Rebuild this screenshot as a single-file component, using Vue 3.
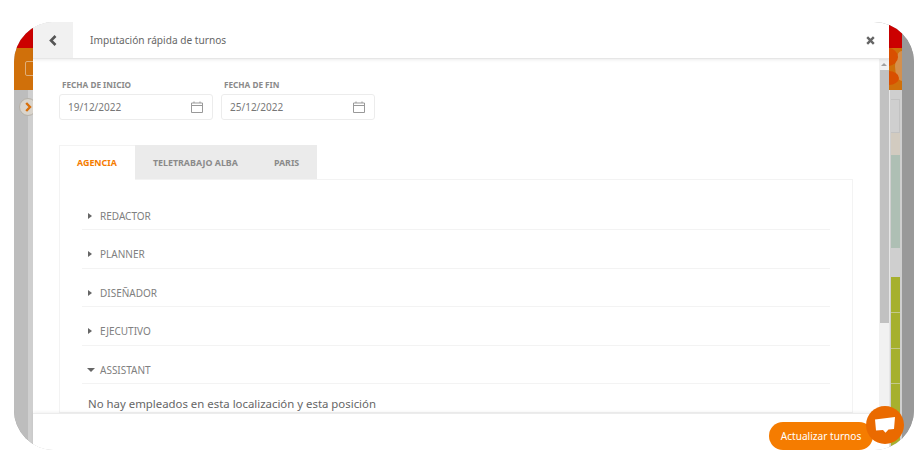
<template>
  <div class="page">
    <div class="screen">
      <div class="side side-left">
        <div class="band-red"></div>
        <div class="band-orange"><span class="logo-box"></span></div>
        <div class="rail-left">
          <span class="toggle">
            <svg width="7" height="10" viewBox="0 0 7 10"><path d="M1.2 1 L5 5 L1.2 9" fill="none" stroke="#d96f0a" stroke-width="2.4" /></svg>
          </span>
        </div>
      </div>

      <div class="modal">
        <header class="modal-head">
          <button class="back">
            <svg width="8" height="11" viewBox="0 0 8 11"><path d="M6.5 1 L2 5.5 L6.5 10" fill="none" stroke="#555" stroke-width="2.6" /></svg>
          </button>
          <span class="title">Imputación rápida de turnos</span>
          <svg class="close" width="9" height="9" viewBox="0 0 9 9"><path d="M1.2 1.2 L7.8 7.8 M7.8 1.2 L1.2 7.8" stroke="#666" stroke-width="2.4" /></svg>
        </header>

        <div class="modal-body">
          <div class="content">
            <div class="dates">
              <div v-for="d in dates" :key="d.label" class="date-field">
                <label>{{ d.label }}</label>
                <div class="date-input">
                  <span>{{ d.value }}</span>
                  <svg width="12" height="12" viewBox="0 0 12 12" fill="none" stroke="#999" stroke-width="1">
                    <path d="M.5 2 H11.5 V11.5 H.5 Z M.5 4.5 H11.5 M3 .5 V2 M9 .5 V2" />
                  </svg>
                </div>
              </div>
            </div>

            <div class="tabs">
              <div v-for="(t, i) in tabs" :key="t" class="tab" :class="{ active: i === 0 }">{{ t }}</div>
            </div>

            <div class="panel">
              <div v-for="p in positions" :key="p.name" class="row">
                <span class="caret" :class="{ open: p.open }"></span>
                {{ p.name }}
              </div>
              <p class="empty">No hay empleados en esta localización y esta posición</p>
            </div>
          </div>

          <div class="scrollbar">
            <div class="arrow"></div>
            <div class="thumb"></div>
          </div>
        </div>

        <footer class="modal-foot">
          <button class="update">Actualizar turnos</button>
        </footer>
      </div>

      <div class="side side-right">
        <div class="band-red"></div>
        <div class="band-orange">
          <span class="glow"></span>
          <span class="blob blob1"></span>
          <span class="blob blob2"></span>
        </div>
        <div class="rail-right">
          <div v-for="c in cells" :key="c.id" class="cell" :class="c.kind" :style="{ height: c.h + 'px' }"></div>
        </div>
      </div>
      <div class="edge"></div>
    </div>

    <button class="chat">
      <svg width="20" height="16" viewBox="0 0 20 16"><path d="M0 2.5 L20 0 L19 12 L13.5 12.5 L10.5 15.8 L8 13 L1 13.5 Z" fill="#fff" /></svg>
    </button>
  </div>
</template>

<script setup>
const dates = [
  { label: 'FECHA DE INICIO', value: '19/12/2022' },
  { label: 'FECHA DE FIN', value: '25/12/2022' }
]

const tabs = ['AGENCIA', 'TELETRABAJO ALBA', 'PARIS']

const positions = [
  { name: 'REDACTOR', open: false },
  { name: 'PLANNER', open: false },
  { name: 'DISEÑADOR', open: false },
  { name: 'EJECUTIVO', open: false },
  { name: 'ASSISTANT', open: true }
]

// right hand strip, top to bottom
const cells = [
  { id: 1, h: 9, kind: 'gap' },
  { id: 2, h: 34, kind: 'outline' },
  { id: 3, h: 22, kind: 'tan' },
  { id: 4, h: 93, kind: 'sage' },
  { id: 5, h: 29, kind: 'gap' },
  { id: 6, h: 36, kind: 'olive' },
  { id: 7, h: 36, kind: 'olive' },
  { id: 8, h: 35, kind: 'olive' },
  { id: 9, h: 63, kind: 'olive' }
]
</script>

<style>
body {
  background: #fff;
}
</style>

<style scoped>
.page {
  position: relative;
  width: 914px;
  height: 452px;
  overflow: hidden;
  background: #fff;
  font-family: "Noto Sans", "Open Sans", sans-serif;
}

.screen {
  display: flex;
  width: 900px;
  height: 428px;
  margin: 22px 0 0 14px;
  border-radius: 40px;
  overflow: hidden;
  background: #999;
}

.side {
  display: flex;
  flex-direction: column;
  flex: none;
}

.side-left {
  width: 19px;
}

.side-right {
  width: 13px;
}

.edge {
  flex: 1;
  background: #999;
}

.band-red {
  height: 26px;
  background: #cc0000;
}

.band-orange {
  position: relative;
  height: 42px;
  background: #d0700a;
  overflow: hidden;
}

.logo-box {
  position: absolute;
  left: 11px;
  top: 13px;
  width: 14px;
  height: 13px;
  border: 1px solid #e0ae78;
  border-radius: 2px;
}

.glow {
  position: absolute;
  left: 6px;
  top: 3px;
  width: 14px;
  height: 30px;
  border-radius: 50%;
  background: #d4904e;
}

.blob {
  position: absolute;
  border-radius: 50%;
  background: #d94f00;
}

.blob1 {
  left: -11px;
  top: 0;
  width: 20px;
  height: 18px;
}

.blob2 {
  left: -12px;
  top: 23px;
  width: 22px;
  height: 14px;
}

.rail-left {
  position: relative;
  flex: 1;
  overflow: hidden;
  background: linear-gradient(to right, #bdbdbd 14px, #cfcfcf 14px);
}

.toggle {
  position: absolute;
  left: 5px;
  top: 8px;
  box-sizing: border-box;
  width: 18px;
  height: 18px;
  display: flex;
  align-items: center;
  justify-content: center;
  border-radius: 50%;
  background: #d9d4cc;
  border: 1px solid #b5b0a8;
}

.rail-right {
  flex: 1;
  padding: 0 2px;
  background: linear-gradient(to right, #e6e6e6 1px, #cfcfcf 1px);
}

.cell {
  box-sizing: border-box;
}

.outline {
  border: 1px solid #c2c2c2;
  border-left: 0;
}

.tan {
  background: #d2cbc0;
}

.sage {
  background: #aebfb4;
}

.olive {
  background: #a6b02e;
  border-bottom: 1px solid #c4c98a;
}

.modal {
  flex: none;
  width: 856px;
  height: 100%;
  display: flex;
  flex-direction: column;
  background: #fff;
}

.modal-head {
  flex: none;
  height: 37px;
  box-sizing: border-box;
  display: flex;
  align-items: center;
  border-bottom: 1px solid #e6e6e6;
  box-shadow: 0 1px 3px rgba(0, 0, 0, 0.08);
  position: relative;
}

.back {
  width: 40px;
  height: 36px;
  border: 0;
  padding: 0;
  background: #f1f1f1;
  display: flex;
  align-items: center;
  justify-content: center;
}

.title {
  margin-left: 17px;
  font-size: 10.15px;
  color: #666;
}

.close {
  margin-left: auto;
  margin-right: 14px;
}

.modal-body {
  flex: 1;
  min-height: 0;
  display: flex;
  overflow: hidden;
}

.content {
  flex: 1;
  min-width: 0;
  padding: 20px 26px 0 26px;
}

.dates {
  display: flex;
  gap: 8px;
}

.date-field label {
  display: block;
  padding-left: 3px;
  font-size: 8.2px;
  font-weight: 700;
  line-height: 11px;
  color: #8a8a8a;
}

.date-input {
  width: 154px;
  height: 26px;
  margin-top: 4px;
  box-sizing: border-box;
  padding: 0 9px 1px 8px;
  display: flex;
  align-items: center;
  justify-content: space-between;
  border: 1px solid #ececec;
  border-radius: 3px;
  font-size: 10px;
  color: #777;
}

.tabs {
  display: flex;
  margin-top: 25px;
  height: 34px;
}

.tab {
  padding: 0 18px;
  display: flex;
  align-items: center;
  background: #ebebeb;
  font-size: 8.9px;
  font-weight: 700;
  color: #8a8a8a;
}

.tab.active {
  background: #fff;
  color: #f57c00;
  box-shadow: inset 1px 1px 0 #f3f3f3;
  margin-bottom: -1px;
  position: relative;
}

.panel {
  border: 1px solid #f3f3f3;
  padding: 11.5px 22px 0;
}

.row {
  height: 38.5px;
  box-sizing: border-box;
  padding-top: 10.5px;
  padding-left: 6px;
  display: flex;
  align-items: center;
  border-bottom: 1px solid #f3f3f3;
  font-size: 10px;
  color: #808080;
}

.caret {
  width: 0;
  height: 0;
  margin-right: 8px;
  border-left: 4px solid #666;
  border-top: 3px solid transparent;
  border-bottom: 3px solid transparent;
}

.caret.open {
  margin-left: -1px;
  border-top: 4px solid #666;
  border-left: 4px solid transparent;
  border-right: 4px solid transparent;
  border-bottom: 0;
  margin-right: 5px;
}

.empty {
  margin: 11.5px 0 0 6px;
  font-size: 11.4px;
  line-height: 16px;
  color: #666;
}

.scrollbar {
  flex: none;
  width: 10px;
  display: flex;
  flex-direction: column;
  background: #f1f1f1;
}

.arrow {
  height: 11px;
  display: flex;
  align-items: center;
  justify-content: center;
}

.arrow::before {
  content: "";
  border-left: 3px solid transparent;
  border-right: 3px solid transparent;
  border-bottom: 3px solid #a0a0a0;
}

.thumb {
  height: 253px;
  margin-left: 1px;
  background: #c1c1c1;
}

.modal-foot {
  flex: none;
  height: 37px;
  position: relative;
  background: #fff;
  border-top: 1px solid #ececec;
  box-shadow: 0 -1px 3px rgba(0, 0, 0, 0.06);
  box-sizing: border-box;
}

.update {
  position: absolute;
  right: 16px;
  top: 8px;
  width: 104px;
  height: 28px;
  border: 0;
  padding: 0;
  border-radius: 15px;
  background: #f57c00;
  color: #fff;
  font-family: inherit;
  font-size: 10.1px;
}

.chat {
  position: absolute;
  left: 866px;
  top: 406px;
  width: 38px;
  height: 38px;
  border: 0;
  padding: 0;
  border-radius: 50%;
  background: #ea6a00;
  display: flex;
  align-items: center;
  justify-content: center;
}
</style>
